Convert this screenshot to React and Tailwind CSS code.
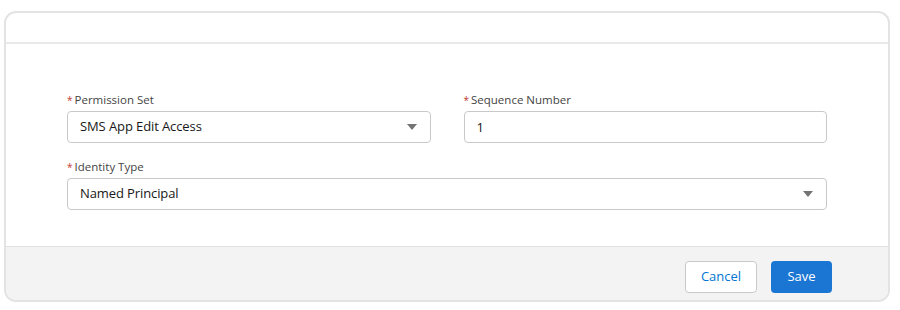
import { useState } from 'react'

function Label({ children }) {
  return (
    <label className="flex items-center h-4 mb-[3px] text-[11.5px] leading-4 text-[#444444]">
      <abbr className="no-underline text-[#c23934] text-[10px] mr-[2px]" title="required">*</abbr>
      {children}
    </label>
  )
}

function SelectBox({ value }) {
  return (
    <div className="flex items-center justify-between h-8 px-3 border border-[#c9c9c9] rounded-[4px] bg-white text-[13px] tracking-[-0.1px] text-[#181818]">
      <span>{value}</span>
      {/* dropdown arrow */}
      <svg width="10" height="6" viewBox="0 0 10 6" className="mr-[1px]">
        <path d="M0 0h10L5 6z" fill="#747474" />
      </svg>
    </div>
  )
}

export default function App() {
  const [seq, setSeq] = useState('1')

  return (
    <div className="w-[900px] h-[310px] bg-white pt-[11px] pl-[4px]" style={{ fontFamily: '"Open Sans", "Noto Sans", sans-serif' }}>
      <div className="w-[886px] h-[291px] flex flex-col border-2 border-[#e3e3e3] rounded-[12px] overflow-hidden">
        {/* Header */}
        <div className="h-[31px] shrink-0 border-b-2 border-[#e9e9e9]" />

        {/* Body */}
        <div className="flex-1 pt-[48px]">
          <div className="w-[760px] mx-auto">
            <div className="grid grid-cols-2 gap-x-[33px]">
              <div>
                <Label>Permission Set</Label>
                <SelectBox value="SMS App Edit Access" />
              </div>
              <div>
                <Label>Sequence Number</Label>
                <input
                  className="w-full h-8 px-3 border border-[#c9c9c9] rounded-[4px] text-[13px] text-[#181818] outline-none"
                  value={seq}
                  onChange={(e) => setSeq(e.target.value)}
                />
              </div>
            </div>
            <div className="mt-4">
              <Label>Identity Type</Label>
              <SelectBox value="Named Principal" />
            </div>
          </div>
        </div>

        {/* Footer */}
        <div className="h-[54px] shrink-0 flex items-start justify-end gap-[14px] pt-[14px] pr-[56px] bg-[#f3f3f3] border-t border-[#e0e0e0]">
          <button className="h-8 w-[72px] border border-[#c9c9c9] rounded-[4px] bg-white text-[13px] text-[#0176d3]">
            Cancel
          </button>
          <button className="h-8 w-[61px] rounded-[4px] bg-[#1b76d3] text-[13px] text-white">
            Save
          </button>
        </div>
      </div>
    </div>
  )
}
